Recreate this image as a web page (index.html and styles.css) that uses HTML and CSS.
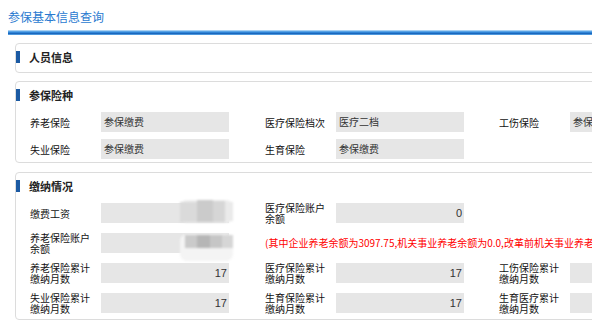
FILE: index.html
```html
<!DOCTYPE html>
<html lang="zh-CN">
<head>
<meta charset="utf-8">
<title>参保基本信息查询</title>
<link rel="stylesheet" href="styles.css">
</head>
<body>
<div class="page-title">参保基本信息查询</div>
<div class="title-bar"></div>

<section class="panel panel-person">
  <div class="phead"><span class="marker"></span><span class="ptitle">人员信息</span></div>
</section>

<section class="panel panel-ins">
  <div class="phead"><span class="marker"></span><span class="ptitle">参保险种</span></div>
  <div class="grid grid-ins">
    <div class="field"><span class="label">养老保险</span><span class="input">参保缴费</span></div>
    <div class="field"><span class="label">医疗保险档次</span><span class="input">医疗二档</span></div>
    <div class="field"><span class="label">工伤保险</span><span class="input">参保缴费</span></div>
    <div class="field"><span class="label">失业保险</span><span class="input">参保缴费</span></div>
    <div class="field"><span class="label">生育保险</span><span class="input">参保缴费</span></div>
  </div>
</section>

<section class="panel panel-pay">
  <div class="phead"><span class="marker"></span><span class="ptitle">缴纳情况</span></div>
  <div class="grid grid-pay">
    <div class="field"><span class="label">缴费工资</span><span class="input masked"><span class="mosaic m1"><i class="c1"></i><i class="c2"></i><i class="c3"></i><i class="c4"></i></span></span></div>
    <div class="field"><span class="label">医疗保险账户<br>余额</span><span class="input num">0</span></div>
    <div class="field"></div>
    <div class="field"><span class="label">养老保险账户<br>余额</span><span class="input masked"><span class="mosaic m2"><i class="c1"></i><i class="c2"></i><i class="c3"></i><i class="c4"></i></span></span></div>
    <div class="note">(其中企业养老余额为3097.75,机关事业养老余额为0.0,改革前机关事业养老余额为0.0)</div>
    <div class="field"><span class="label">养老保险累计<br>缴纳月数</span><span class="input num">17</span></div>
    <div class="field"><span class="label">医疗保险累计<br>缴纳月数</span><span class="input num">17</span></div>
    <div class="field"><span class="label">工伤保险累计<br>缴纳月数</span><span class="input num"></span></div>
    <div class="field"><span class="label">失业保险累计<br>缴纳月数</span><span class="input num">17</span></div>
    <div class="field"><span class="label">生育保险累计<br>缴纳月数</span><span class="input num">17</span></div>
    <div class="field"><span class="label">生育医疗累计<br>缴纳月数</span><span class="input num"></span></div>
  </div>
</section>
</body>
</html>
```

FILE: styles.css
```css
html, body {
  overflow: hidden;
}
body {
  margin: 8px;
  background: #fff;
  font-family: "Noto Sans CJK SC", "Noto Sans", sans-serif;
  color: #111;
}
.page-title {
  font-size: 12px;
  line-height: 18px;
  height: 22px;
  color: #2a7ad0;
}
.title-bar {
  height: 5px;
  margin-right: -8px;
  background: linear-gradient(#a9d2f3 0, #a9d2f3 1px, #5aa3e6 1px, #5aa3e6 2px, #2f84d6 2px, #2f84d6 3px, #1b67bd 3px, #1b67bd 4px, #4c97dc 4px);
}
.panel {
  width: 780px;
  margin-left: 7px;
  border: 1px solid #dcdcdc;
  border-radius: 4px;
  padding: 7px 0 9px;
}
.panel-person {
  margin-top: 8px;
}
.panel-ins {
  margin-top: 8px;
  padding-bottom: 3px;
}
.panel-pay {
  margin-top: 9px;
  padding-bottom: 6px;
}
.phead {
  display: flex;
  align-items: center;
  height: 12px;
}
.marker {
  width: 4px;
  height: 12px;
  background: #1b5aa3;
}
.ptitle {
  margin-left: 9px;
  font-size: 11px;
  font-weight: bold;
  color: #222;
  line-height: 12px;
}
.grid {
  display: grid;
  grid-template-columns: 235px 234px 234px;
  padding-left: 14px;
  margin-top: 11px;
}
.grid-ins {
  row-gap: 7px;
}
.grid-pay {
  row-gap: 10px;
}
.field {
  display: flex;
  align-items: center;
  height: 20px;
}
.label {
  width: 71px;
  flex: none;
  font-size: 10px;
  line-height: 11px;
  color: #111;
}
.input {
  position: relative;
  width: 128px;
  height: 20px;
  flex: none;
  box-sizing: border-box;
  padding: 0 3px;
  background: #e6e6e6;
  font-size: 10px;
  line-height: 20px;
  color: #333;
  white-space: nowrap;
  overflow: visible;
}
.num {
  text-align: right;
  padding-right: 2px;
  font-size: 11px;
  font-family: "Liberation Sans", "Noto Sans", sans-serif;
}
.note {
  grid-column: 2 / span 2;
  align-self: center;
  white-space: nowrap;
  font-size: 10px;
  line-height: 12px;
  color: #f00;
}
.mosaic {
  position: absolute;
  left: 79px;
  width: 53px;
  display: block;
  border-radius: 7px;
  background: #eeeeee;
  filter: blur(0.8px);
}
.mosaic i {
  position: absolute;
  display: block;
}
.m1 {
  top: -3px;
  height: 23px;
}
.m1 .c1 { left: 0; top: 2px; width: 17px; height: 20px; background: #dadada; }
.m1 .c2 { left: 17px; top: 0; width: 16px; height: 22px; background: #cbcbcb; }
.m1 .c3 { left: 33px; top: 1px; width: 12px; height: 21px; background: #d6d6d6; }
.m1 .c4 { left: 45px; top: 2px; width: 8px; height: 19px; background: #eaeaea; }
.m2 {
  top: 1px;
  height: 27px;
  background: #f4f4f4;
}
.m2 .c1 { left: 5px; top: 1px; width: 12px; height: 13px; background: #cacaca; }
.m2 .c2 { left: 17px; top: 1px; width: 13px; height: 13px; background: #b6b6b6; }
.m2 .c3 { left: 30px; top: 1px; width: 12px; height: 13px; background: #c6c6c6; }
.m2 .c4 { left: 42px; top: 1px; width: 11px; height: 13px; background: #d6d6d6; }
```
